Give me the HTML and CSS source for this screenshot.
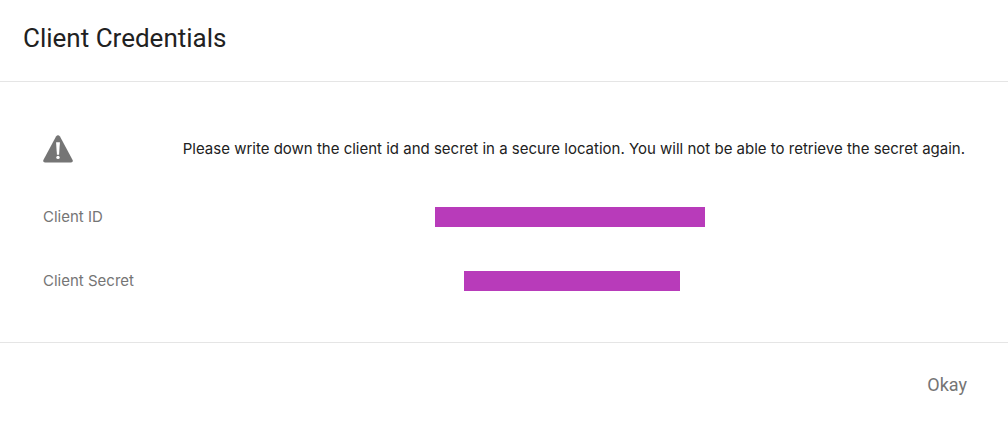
FILE: index.html
```html
<!DOCTYPE html>
<html lang="en">
<head>
<meta charset="utf-8">
<title>Client Credentials</title>
<link rel="stylesheet" href="styles.css">
</head>
<body>
<main class="dialog">
  <header class="dialog-header"><h1 class="title">Client Credentials</h1></header>
  <section class="content">
    <div class="row notice">
      <svg class="warning" viewBox="0 0 30 28" aria-hidden="true">
        <path fill="#757575" d="M13 1.4Q15-1 17 1.4L29.6 25Q30.4 27.5 28 27.5H2Q-.4 27.5 .4 25Z"/>
        <path fill="#fff" d="M13.1 7.3h3.8l-.8 12.4h-2.2z"/>
        <circle cx="15" cy="22.4" r="1.7" fill="#fff"/>
      </svg>
      <p class="message">Please write down the client id and secret in a secure location. You will not be able to retrieve the secret again.</p>
    </div>
    <div class="row">
      <span class="label">Client ID</span>
      <div class="value"><span class="redacted id"></span></div>
    </div>
    <div class="row">
      <span class="label">Client Secret</span>
      <div class="value"><span class="redacted secret"></span></div>
    </div>
  </section>
  <footer class="dialog-footer"><button class="okay" type="button">Okay</button></footer>
</main>
</body>
</html>
```
FILE: styles.css
```css
* { box-sizing: border-box; }
body { margin: 0; background: #fff; color: #212121; font-family: Roboto, sans-serif; }
.dialog-header { padding: 20px 23px 25px; border-bottom: 1px solid #e5e5e5; }
.title { margin: 0; font-size: 26px; line-height: 36px; font-weight: 400; }
.content { padding: 35px 43px 29px; border-bottom: 1px solid #e5e5e5; }
.row { display: flex; align-items: center; min-height: 64px; font-family: Inter, sans-serif; font-size: 15px; line-height: 24px; }
.warning { width: 30px; height: 28px; flex: none; }
.notice { justify-content: space-between; margin-bottom: 4px; }
.message { margin: 0; white-space: nowrap; }
.label { flex: none; width: 132px; color: #757575; }
.value { flex: 1; display: flex; justify-content: center; }
.redacted { height: 20px; background: #b83bba; }
.id { width: 270px; }
.secret { width: 216px; margin-left: 4px; }
.dialog-footer { display: flex; justify-content: flex-end; padding: 24px 33px; }
.okay { padding: 4px 8px; border: 0; background: none; color: #757575; font: 18px/28px Roboto, sans-serif; }
```
